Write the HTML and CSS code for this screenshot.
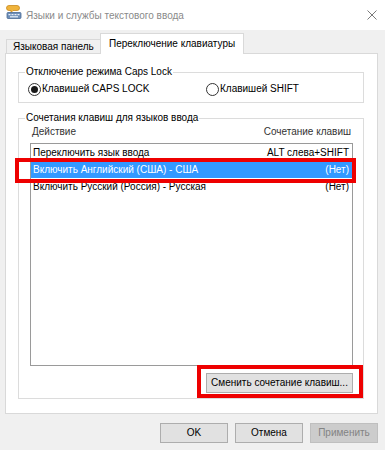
FILE: index.html
```html
<!DOCTYPE html>
<html lang="ru">
<head>
<meta charset="utf-8">
<title>Языки и службы текстового ввода</title>
<link rel="stylesheet" href="styles.css">
</head>
<body>
<div class="window">
  <div class="titlebar">
    <svg class="app-icon" width="16" height="16" viewBox="0 0 16 16">
      <path d="M3 1.5h8a2.5 2.5 0 0 1 0 5H7l-2 2v-2H3a2.5 2.5 0 0 1 0-5z" fill="#f0b43c" stroke="#c98a1e" stroke-width="0.8"/>
      <rect x="1" y="8.5" width="14" height="6" rx="1" fill="#6f8fb8" stroke="#4a6a94" stroke-width="0.8"/>
      <rect x="2.5" y="10" width="2" height="1.2" fill="#e8f0fa"/>
      <rect x="5.5" y="10" width="2" height="1.2" fill="#e8f0fa"/>
      <rect x="8.5" y="10" width="2" height="1.2" fill="#e8f0fa"/>
      <rect x="11.5" y="10" width="2" height="1.2" fill="#e8f0fa"/>
      <rect x="4" y="12.2" width="8" height="1.2" fill="#e8f0fa"/>
    </svg>
    <span class="title">Языки и службы текстового ввода</span>
    <svg class="close" width="10" height="10" viewBox="0 0 10 10">
      <path d="M0.5 0.5L9.5 9.5M9.5 0.5L0.5 9.5" stroke="#7a7a7a" stroke-width="1"/>
    </svg>
  </div>

  <div class="tabs">
    <div class="tab tab-lang">Языковая панель</div>
    <div class="tab tab-switch active">Переключение клавиатуры</div>
  </div>

  <div class="panel">
    <fieldset class="group">
      <legend>Отключение режима Caps Lock</legend>
      <div class="radios">
        <label class="radio"><span class="dot checked"></span>Клавишей CAPS LOCK</label>
        <label class="radio"><span class="dot"></span>Клавишей SHIFT</label>
      </div>
    </fieldset>

    <fieldset class="group group-keys">
      <legend>Сочетания клавиш для языков ввода</legend>
      <div class="keys-body">
        <div class="cols"><span>Действие</span><span>Сочетание клавиш</span></div>
        <div class="list">
          <div class="row"><span>Переключить язык ввода</span><span>ALT слева+SHIFT</span></div>
          <div class="row selected"><span>Включить Английский (США) - США</span><span>(Нет)</span><span class="mark mark-row"></span></div>
          <div class="row"><span>Включить Русский (Россия) - Русская</span><span>(Нет)</span></div>
        </div>
        <div class="actions">
          <span class="btn-wrap">
            <button class="btn btn-change">Сменить сочетание клавиш...</button>
            <span class="mark mark-btn"></span>
          </span>
        </div>
      </div>
    </fieldset>
  </div>

  <div class="footer">
    <button class="btn btn-foot">OK</button>
    <button class="btn btn-foot">Отмена</button>
    <button class="btn btn-foot disabled" disabled>Применить</button>
  </div>
</div>
</body>
</html>
```

FILE: styles.css
```css
* { box-sizing: border-box; }

html, body {
  margin: 0;
  padding: 0;
}

body {
  width: 385px;
  height: 450px;
  overflow: hidden;
  background: #f0f0f0;
  font-family: "Liberation Sans", Arial, sans-serif;
  font-size: 10px;
  color: #000;
}

.window {
  display: flex;
  flex-direction: column;
  height: 450px;
}

/* title bar */
.titlebar {
  height: 30px;
  background: #fff;
  display: flex;
  align-items: center;
  padding: 0 8px 0 6px;
}

.app-icon {
  align-self: flex-start;
  margin-top: 4px;
  flex: none;
}

.title {
  margin-left: 4px;
  color: #8a8a8a;
}

.close {
  margin-left: auto;
  flex: none;
}

/* tabs */
.tabs {
  height: 23px;
  display: flex;
  align-items: flex-end;
  padding-left: 6px;
}

.tab {
  height: 14px;
  line-height: 13px;
  border: 1px solid #d9d9d9;
  border-bottom: none;
  background: #f0f0f0;
  padding-left: 6px;
  white-space: nowrap;
}

.tab-lang {
  width: 94px;
  border-right: none;
}

.tab-switch {
  width: 144px;
}

.tab.active {
  height: 21px;
  line-height: 20px;
  background: #fff;
  margin-bottom: -1px;
  position: relative;
  z-index: 1;
  padding-left: 8px;
}

/* main panel */
.panel {
  margin: 0 7px 0 5px;
  height: 361px;
  background: #fff;
  border: 1px solid #d9d9d9;
  padding: 11px 13px 0 12px;
}

.group {
  margin: 0;
  padding: 0;
  border: 1px solid #dcdcdc;
  min-width: 0;
}

.group legend {
  margin-left: 6px;
  padding: 0 1px;
  line-height: 14px;
}

.group-keys {
  margin-top: 8px;
}

.radios {
  display: grid;
  grid-template-columns: 178px auto;
  padding: 2px 0 5px 9px;
  line-height: 16px;
}

.radio {
  display: flex;
  align-items: center;
  gap: 1px;
}

.dot {
  width: 13px;
  height: 13px;
  border: 1px solid #333;
  border-radius: 50%;
  background: #fff;
  display: flex;
  align-items: center;
  justify-content: center;
  flex: none;
}

.dot.checked::after {
  content: "";
  width: 7px;
  height: 7px;
  border-radius: 50%;
  background: #1a1a1a;
}

.keys-body {
  padding: 0 10px 5px 11px;
}

.cols {
  display: flex;
  justify-content: space-between;
  line-height: 14px;
  padding: 0 2px;
  color: #333;
}

.list {
  margin-top: 4px;
  height: 223px;
  border: 1px solid #9a9a9a;
  background: #fff;
}

.row {
  display: flex;
  justify-content: space-between;
  height: 17px;
  line-height: 17px;
  padding: 0 3px 0 2px;
  white-space: nowrap;
}

.row.selected {
  background: #3399ff;
  color: #fff;
  position: relative;
}

.mark {
  position: absolute;
  border: 4px solid #ee0000;
  pointer-events: none;
}

.mark-row {
  left: -16px;
  right: -4px;
  top: -3px;
  bottom: -5px;
}

.actions {
  display: flex;
  justify-content: flex-end;
  margin-top: 7px;
}

.btn-wrap {
  position: relative;
  display: flex;
}

.mark-btn {
  left: -9px;
  right: -10px;
  top: -8px;
  bottom: -5px;
}

.btn {
  height: 20px;
  margin: 0;
  padding: 0;
  border: 1px solid #adadad;
  background: #e1e1e1;
  font-family: inherit;
  font-size: 10px;
  color: #000;
  line-height: 18px;
  white-space: nowrap;
}

.btn-change {
  width: 147px;
}

/* footer */
.footer {
  display: flex;
  justify-content: flex-end;
  gap: 7px;
  margin-top: 9px;
  padding-right: 7px;
}

.btn-foot {
  width: 68px;
}

.btn.disabled {
  background: #cccccc;
  border-color: #bfbfbf;
  color: #838383;
}
```
